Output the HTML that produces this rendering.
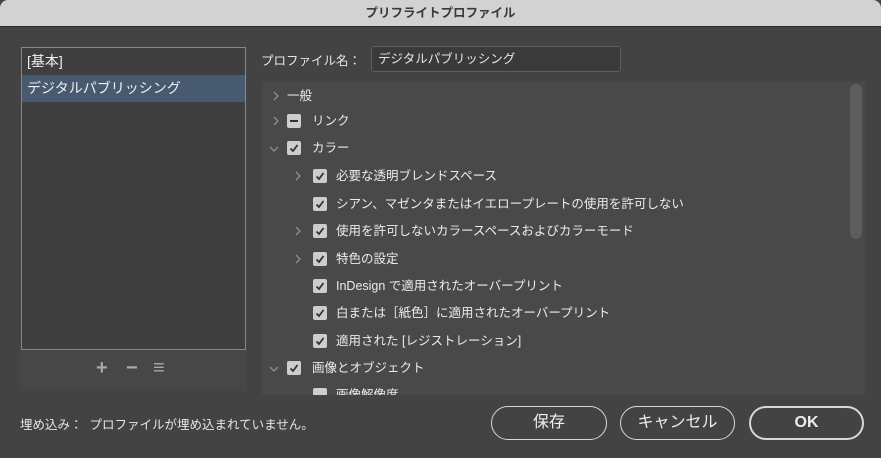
<!DOCTYPE html>
<html><head><meta charset="utf-8"><style>
*{box-sizing:border-box;margin:0;padding:0}
body{width:881px;height:458px;overflow:hidden;background:#434343;font-family:"Liberation Sans","Noto Sans CJK JP",sans-serif;color:#e6e6e6;position:relative;font-size:12.5px}
.title{position:absolute;left:0;top:0;width:881px;height:27px;background:#d2d2d2;border-bottom:1px solid #2a2a2a;color:#3a3a3a;font-weight:bold;font-size:12.5px;text-align:center;line-height:26px;border-radius:8px 8px 0 0}
.list{position:absolute;left:21px;top:47px;width:225px;height:303px;border:1.5px solid #5a8fd6;background:#3f3f3f}
.list div{height:27px;line-height:26px;padding-left:5px;font-size:14px;color:#f0f0f0}
.list .sel{background:#485a70}
.lbar{position:absolute;left:20px;top:350px;width:227px;height:41px;background:#474747;color:#a8a8a8;font-size:20px;font-weight:bold}
.abs{position:absolute}
.input{position:absolute;left:371px;top:46px;width:250px;height:26px;background:#3a3a3a;border:1px solid #5e5e5e;border-radius:3px;padding-left:6px;line-height:24px;font-size:12.5px}
.tree{position:absolute;left:262px;top:82px;width:603px;height:313px;background:#494949;overflow:hidden}
.row{position:absolute;height:20px;line-height:20px;font-size:12.5px;color:#ececec}
.cb{position:absolute;width:14px;height:14px;background:#cdcdcd;border-radius:2px;top:3px}
.cb svg{position:absolute;left:2px;top:2px}
.chev{position:absolute;top:5px}
.sb{position:absolute;left:588px;top:2px;width:12px;height:155px;background:#5d5d5d;border-radius:6px}
.btn{position:absolute;top:406px;height:34px;border:1.5px solid #d8d8d8;border-radius:17px;text-align:center;line-height:31px;font-size:16px;color:#eee}
</style></head><body>
<div class="title">プリフライトプロファイル</div>
<div class="list"><div>[基本]</div><div class="sel">デジタルパブリッシング</div></div>
<div class="lbar"><span class="abs" style="left:76px;top:7px">+</span><span class="abs" style="left:106px;top:7px">−</span><span class="abs" style="left:133px;top:7px;font-weight:normal">≡</span></div>
<div class="abs" style="left:261px;top:50px;font-size:12.5px">プロファイル名：</div>
<div class="input">デジタルパブリッシング</div>
<div class="tree">
<svg width="0" height="0" style="position:absolute"><defs><path id="ck" d="M1.5 5.5 L4 8 L8.5 2" stroke="#333" stroke-width="1.8" fill="none"/><path id="cr" d="M2 1 L6 5 L2 9" stroke="#8f8f8f" stroke-width="1.3" fill="none"/><path id="cd" d="M1 2 L5 6 L9 2" stroke="#8f8f8f" stroke-width="1.3" fill="none"/></defs></svg>
<div class="row" style="top:4px;left:0;width:300px"><svg class="chev" style="left:10px" width="10" height="10"><use href="#cr"/></svg><span class="abs" style="left:25px">一般</span></div>
<div class="row" style="top:29px;left:0;width:300px"><svg class="chev" style="left:10px" width="10" height="10"><use href="#cr"/></svg><span class="cb" style="left:25px"><span class="abs" style="left:3px;top:6px;width:8px;height:2px;background:#333"></span></span><span class="abs" style="left:50px">リンク</span></div>
<div class="row" style="top:56px;left:0;width:300px"><svg class="chev" style="left:7px;top:7px" width="10" height="10"><use href="#cd"/></svg><span class="cb" style="left:25px"><svg width="10" height="10"><use href="#ck"/></svg></span><span class="abs" style="left:50px">カラー</span></div>
<div class="row" style="top:84px;left:0;width:500px"><svg class="chev" style="left:32px" width="10" height="10"><use href="#cr"/></svg><span class="cb" style="left:51px"><svg width="10" height="10"><use href="#ck"/></svg></span><span class="abs" style="left:74px">必要な透明ブレンドスペース</span></div>
<div class="row" style="top:112px;left:0;width:500px"><span class="cb" style="left:51px"><svg width="10" height="10"><use href="#ck"/></svg></span><span class="abs" style="left:74px">シアン、マゼンタまたはイエロープレートの使用を許可しない</span></div>
<div class="row" style="top:139px;left:0;width:500px"><svg class="chev" style="left:32px" width="10" height="10"><use href="#cr"/></svg><span class="cb" style="left:51px"><svg width="10" height="10"><use href="#ck"/></svg></span><span class="abs" style="left:74px">使用を許可しないカラースペースおよびカラーモード</span></div>
<div class="row" style="top:167px;left:0;width:500px"><svg class="chev" style="left:32px" width="10" height="10"><use href="#cr"/></svg><span class="cb" style="left:51px"><svg width="10" height="10"><use href="#ck"/></svg></span><span class="abs" style="left:74px">特色の設定</span></div>
<div class="row" style="top:194px;left:0;width:500px"><span class="cb" style="left:51px"><svg width="10" height="10"><use href="#ck"/></svg></span><span class="abs" style="left:74px">InDesign で適用されたオーバープリント</span></div>
<div class="row" style="top:221px;left:0;width:500px"><span class="cb" style="left:51px"><svg width="10" height="10"><use href="#ck"/></svg></span><span class="abs" style="left:74px">白または［紙色］に適用されたオーバープリント</span></div>
<div class="row" style="top:249px;left:0;width:500px"><span class="cb" style="left:51px"><svg width="10" height="10"><use href="#ck"/></svg></span><span class="abs" style="left:74px">適用された [レジストレーション]</span></div>
<div class="row" style="top:276px;left:0;width:500px"><svg class="chev" style="left:7px;top:7px" width="10" height="10"><use href="#cd"/></svg><span class="cb" style="left:25px"><svg width="10" height="10"><use href="#ck"/></svg></span><span class="abs" style="left:50px">画像とオブジェクト</span></div>
<div class="row" style="top:303px;left:0;width:500px"><span class="cb" style="left:51px"></span><span class="abs" style="left:74px">画像解像度</span></div>
<div class="sb"></div>
</div>
<div class="abs" style="left:20px;top:414px;font-size:12.5px">埋め込み：&nbsp; プロファイルが埋め込まれていません。</div>
<div class="btn" style="left:491px;width:116px">保存</div>
<div class="btn" style="left:620px;width:115px">キャンセル</div>
<div class="btn" style="left:749px;width:115px;border-width:2.5px;line-height:29px;font-weight:bold">OK</div>
</body></html>
